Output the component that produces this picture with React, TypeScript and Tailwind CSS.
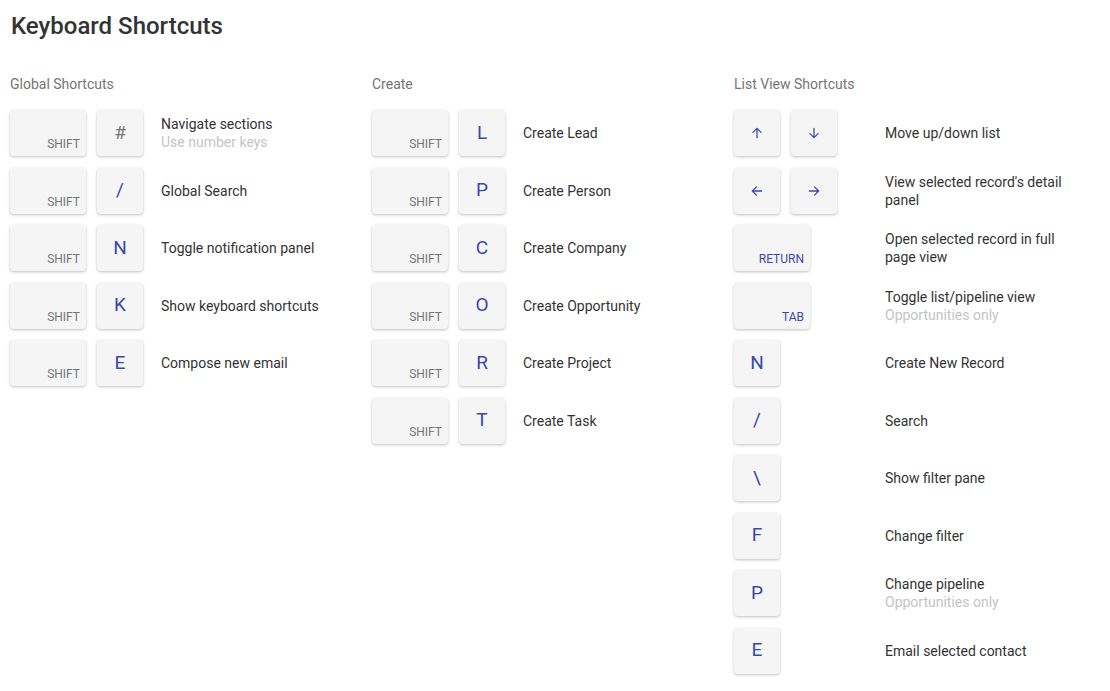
import React from "react";

type Row = { keys: string[]; label: string; sub?: string };

const ArrowIcon = ({ dir }: { dir: string }) => {
  const rot = { up: 0, right: 90, down: 180, left: 270 }[dir] ?? 0;
  return (
    <svg width="14" height="14" viewBox="0 0 24 24" style={{ transform: `rotate(${rot}deg)` }} fill="none" stroke="#3949ab" strokeWidth="2.2" strokeLinecap="round" strokeLinejoin="round">
      <path d="M12 20V4M5 11l7-7 7 7" />
    </svg>
  );
};

const Key = ({ k }: { k: string }) => {
  const base = "h-[46px] rounded-[4px] bg-[#f5f5f5] shadow-[0_1px_3px_rgba(0,0,0,0.25)] flex";
  if (k === "SHIFT" || k === "RETURN" || k === "TAB") {
    return (
      <div className={`${base} w-[76px] items-end justify-end px-[6px] pb-[3px]`}>
        <span className={`text-[12px] ${k === "SHIFT" ? "text-[#757575]" : "text-[#3949ab]"}`}>{k}</span>
      </div>
    );
  }
  return (
    <div className={`${base} w-[46px] items-center justify-center`}>
      {["up", "down", "left", "right"].includes(k) ? (
        <ArrowIcon dir={k} />
      ) : (
        <span className={`text-[19px] ${k === "#" ? "text-[#757575]" : "text-[#3949ab]"}`}>{k}</span>
      )}
    </div>
  );
};

const Column = ({ title, rows }: { title: string; rows: Row[] }) => (
  <div className="w-[362px] shrink-0">
    <div className="text-[14px] text-[#757575] h-[20px] leading-[20px] mt-[74px] mb-[16px]">{title}</div>
    <div className="flex flex-col gap-[11.5px]">
      {rows.map((r, i) => (
        <div key={i} className="flex items-center h-[46px]">
          <div className="w-[151px] shrink-0 flex gap-[11px]">
            {r.keys.map((k, j) => (
              <Key key={j} k={k} />
            ))}
          </div>
          <div className="w-[200px] text-[14px] leading-[18px]">
            <div className="text-[#333]">{r.label}</div>
            {r.sub && <div className="text-[#c4c4c4]">{r.sub}</div>}
          </div>
        </div>
      ))}
    </div>
  </div>
);

export default function App() {
  const global: Row[] = [
    { keys: ["SHIFT", "#"], label: "Navigate sections", sub: "Use number keys" },
    { keys: ["SHIFT", "/"], label: "Global Search" },
    { keys: ["SHIFT", "N"], label: "Toggle notification panel" },
    { keys: ["SHIFT", "K"], label: "Show keyboard shortcuts" },
    { keys: ["SHIFT", "E"], label: "Compose new email" },
  ];
  const create: Row[] = [
    { keys: ["SHIFT", "L"], label: "Create Lead" },
    { keys: ["SHIFT", "P"], label: "Create Person" },
    { keys: ["SHIFT", "C"], label: "Create Company" },
    { keys: ["SHIFT", "O"], label: "Create Opportunity" },
    { keys: ["SHIFT", "R"], label: "Create Project" },
    { keys: ["SHIFT", "T"], label: "Create Task" },
  ];
  const list: Row[] = [
    { keys: ["up", "down"], label: "Move up/down list" },
    { keys: ["left", "right"], label: "View selected record's detail panel" },
    { keys: ["RETURN"], label: "Open selected record in full page view" },
    { keys: ["TAB"], label: "Toggle list/pipeline view", sub: "Opportunities only" },
    { keys: ["N"], label: "Create New Record" },
    { keys: ["/"], label: "Search" },
    { keys: ["\\"], label: "Show filter pane" },
    { keys: ["F"], label: "Change filter" },
    { keys: ["P"], label: "Change pipeline", sub: "Opportunities only" },
    { keys: ["E"], label: "Email selected contact" },
  ];
  return (
    <div className="relative w-[1110px] h-[691px] bg-white overflow-hidden" style={{ fontFamily: "Roboto, 'Liberation Sans', sans-serif" }}>
      <div className="absolute left-[11px] top-[8px] text-[24px] font-medium text-[#333]">Keyboard Shortcuts</div>
      <div className="flex pl-[10px]">
        <Column title="Global Shortcuts" rows={global} />
        <Column title="Create" rows={create} />
        <Column title="List View Shortcuts" rows={list} />
      </div>
    </div>
  );
}
